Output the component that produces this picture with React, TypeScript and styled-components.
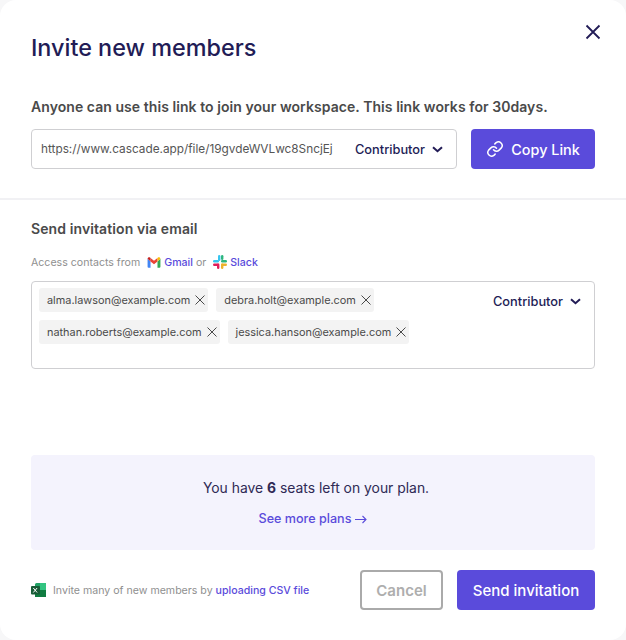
import React from 'react';
import styled, { createGlobalStyle } from 'styled-components';

const GlobalStyle = createGlobalStyle`
    html, body {
        margin: 0;
        background: #f7f7f8;
    }
    body {
        font-family: Inter, "Liberation Sans", sans-serif;
    }
`;

const Modal = styled.div`
    position: relative;
    width: 626px;
    height: 640px;
    box-sizing: border-box;
    background: #fff;
    border-radius: 16px;
    overflow: hidden;
`;

const CloseButton = styled.button`
    position: absolute;
    top: 23px;
    right: 24px;
    width: 18px;
    height: 18px;
    padding: 0;
    border: 0;
    background: none;
    color: #221c56;
    display: flex;
`;

const LinkSection = styled.section`
    height: 200px;
    box-sizing: border-box;
    padding: 33px 31px 0;
    border-bottom: 2px solid #f1f1f4;
`;

const Title = styled.h1`
    margin: 0;
    font-size: 23.4px;
    line-height: 30px;
    font-weight: 500;
    color: #221c56;
`;

const Hint = styled.p`
    margin: 34px 0 0;
    font-size: 14px;
    line-height: 20px;
    font-weight: 600;
    letter-spacing: 0.06px;
    color: #4a4a4a;
`;

const LinkRow = styled.div`
    display: flex;
    gap: 14px;
    margin-top: 12px;
`;

const LinkField = styled.div`
    width: 426px;
    height: 40px;
    box-sizing: border-box;
    display: flex;
    align-items: center;
    justify-content: space-between;
    padding: 0 13px 0 9px;
    border: 1px solid #cfcfd2;
    border-radius: 4px;
`;

const LinkText = styled.span`
    font-size: 11.8px;
    color: #555;
    white-space: nowrap;
`;

const RoleSelect = styled.span`
    display: inline-flex;
    align-items: center;
    gap: 7px;
    font-size: 12.8px;
    font-weight: 500;
    color: #221c56;
`;

const PrimaryButton = styled.button<{ $width: number }>`
    width: ${(p) => p.$width}px;
    height: 40px;
    display: inline-flex;
    align-items: center;
    justify-content: center;
    gap: 7px;
    padding: 0;
    border: 0;
    border-radius: 4px;
    background: #5a4bdb;
    color: #fff;
    font-family: inherit;
    font-size: 14.4px;
    font-weight: 500;
`;

const SendButton = styled(PrimaryButton)`
    font-size: 15px;
`;

const EmailSection = styled.section`
    padding: 19px 31px 0;
`;

const SectionHeading = styled.h2`
    margin: 0;
    font-size: 14px;
    line-height: 20px;
    font-weight: 600;
    letter-spacing: 0.1px;
    color: #4a4a4a;
`;

const ContactsLine = styled.div`
    display: flex;
    align-items: center;
    margin-top: 13px;
    height: 20px;
    font-size: 10.6px;
    color: #8f8f8f;
`;

const Accent = styled.span`
    color: #5a4bdb;
    font-weight: 500;
`;

const BrandIcon = styled.svg`
    width: 14px;
    height: 14px;
    margin: 0 3px 0 7px;
    flex: none;
`;

const Spacer = styled.span`
    width: 3px;
`;

const InviteBox = styled.div`
    position: relative;
    height: 88px;
    margin-top: 9px;
    box-sizing: border-box;
    padding: 6px 7px;
    border: 1px solid #cfcfd2;
    border-radius: 4px;
`;

const ChipList = styled.div`
    display: flex;
    flex-wrap: wrap;
    gap: 8px;
    width: 400px;
`;

const Chip = styled.span`
    height: 24px;
    box-sizing: border-box;
    display: inline-flex;
    align-items: center;
    gap: 4px;
    padding: 0 2px 0 8px;
    background: #f3f3f3;
    border-radius: 3px;
    font-size: 10.9px;
    color: #4a4a4a;
    white-space: nowrap;
`;

const BoxRole = styled(RoleSelect)`
    position: absolute;
    top: 12px;
    right: 13px;
`;

const PlanPanel = styled.section`
    height: 95px;
    margin: 86px 31px 0;
    display: flex;
    flex-direction: column;
    align-items: center;
    border-radius: 4px;
    background: #f4f3fd;
`;

const PlanText = styled.p`
    margin: 23px 0 0;
    padding-left: 6px;
    font-size: 13.9px;
    line-height: 20px;
    color: #2f2a55;

    b {
        font-weight: 700;
    }
`;

const PlanLink = styled.a`
    display: inline-flex;
    align-items: center;
    gap: 4px;
    margin-top: 13px;
    font-size: 12.6px;
    line-height: 16px;
    font-weight: 500;
    color: #5a4bdb;
`;

const Footer = styled.footer`
    display: flex;
    align-items: center;
    margin: 20px 31px 0;
`;

const CsvNote = styled.div`
    flex: 1;
    display: flex;
    align-items: center;
    gap: 7px;
    font-size: 10.6px;
    color: #8f8f8f;
    white-space: nowrap;
`;

const CancelButton = styled.button`
    width: 83px;
    height: 40px;
    margin-right: 14px;
    padding: 0;
    border: 2px solid #aaa;
    border-radius: 4px;
    background: #fff;
    color: #aeaeae;
    font-family: inherit;
    font-size: 15px;
    font-weight: 600;
`;

const XIcon = ({ size = 12 }: { size?: number }) => (
    <svg width={size} height={size} viewBox="0 0 12 12" fill="none" stroke="currentColor" strokeWidth="1">
        <path d="M1.5 1.5l9 9M10.5 1.5l-9 9" />
    </svg>
);

const Chevron = () => (
    <svg width="11" height="7" viewBox="0 0 11 7" fill="none" stroke="currentColor" strokeWidth="2">
        <path d="M1 1.2l4.500 4 4.500-4" />
    </svg>
);

const ArrowRight = () => (
    <svg width="12" height="9" viewBox="0 0 12 9" fill="none" stroke="currentColor" strokeWidth="1.100">
        <path d="M0 4.500h11M7.500 1l3.500 3.500L7.500 8" />
    </svg>
);

const LinkIcon = () => (
    <svg width="18" height="18" viewBox="0 0 24 24" fill="none" stroke="currentColor" strokeWidth="2" strokeLinecap="round" strokeLinejoin="round">
        <path d="M10 13a5 5 0 0 0 7.500.500l3-3a5 5 0 0 0-7-7l-1.700 1.700" />
        <path d="M14 11a5 5 0 0 0-7.500-.500l-3 3a5 5 0 0 0 7 7l1.700-1.700" />
    </svg>
);

const GmailIcon = () => (
    <BrandIcon viewBox="0 0 14 12" style={{ height: 11 }}>
        <path d="M0 2v8.600c0 .600.400 1 1 1h2.200V5z" fill="#4285f4" />
        <path d="M14 2v8.600c0 .600-.400 1-1 1h-2.200V5z" fill="#34a853" />
        <path d="M3.200 5V1.200L7 4l3.800-2.800V5L7 7.800z" fill="#ea4335" />
        <path d="M0 2c0-1.400 1.600-2.200 2.700-1.400l.500.600V5z" fill="#c5221f" />
        <path d="M10.800 1.200l.500-.600C12.400-.200 14 .600 14 2l-3.200 3z" fill="#fbbc04" />
    </BrandIcon>
);

const SlackIcon = () => (
    <BrandIcon viewBox="0 0 14 14">
        <rect x="0" y="5" width="6" height="2.400" rx="1.200" fill="#36c5f0" />
        <rect x="5" y="0" width="2.400" height="6" rx="1.200" fill="#36c5f0" />
        <rect x="8" y="5" width="6" height="2.400" rx="1.200" fill="#2eb67d" />
        <rect x="8" y="0" width="2.400" height="5" rx="1.200" fill="#2eb67d" />
        <rect x="8" y="8.500" width="6" height="2.400" rx="1.200" fill="#ecb22e" />
        <rect x="8" y="8.500" width="2.400" height="5.500" rx="1.200" fill="#ecb22e" />
        <rect x="0" y="8.500" width="6" height="2.400" rx="1.200" fill="#e01e5a" />
        <rect x="4" y="8.500" width="2.400" height="5.500" rx="1.200" fill="#e01e5a" />
    </BrandIcon>
);

const ExcelIcon = () => (
    <svg width="15" height="14" viewBox="0 0 15 14">
        <rect x="4" y="0" width="11" height="14" rx="1.500" fill="#21a366" />
        <rect x="4" y="7" width="11" height="7" fill="#107c41" />
        <rect x="9" y="0" width="6" height="7" fill="#33c481" />
        <rect x="0" y="3" width="9" height="8.500" rx="1" fill="#185c37" />
        <path d="M2.300 5l3.800 4.500M6.100 5L2.300 9.500" stroke="#fff" strokeWidth="1" />
    </svg>
);

const emails = [
    'alma.lawson@example.com',
    'debra.holt@example.com',
    'nathan.roberts@example.com',
    'jessica.hanson@example.com',
];

export default function App() {
    return (
        <Modal>
            <GlobalStyle />
            <CloseButton aria-label="Close">
                <svg width="18" height="18" viewBox="0 0 18 18" fill="none" stroke="currentColor" strokeWidth="1.800">
                    <path d="M2.500 2.500l13 13M15.500 2.500l-13 13" />
                </svg>
            </CloseButton>
            <LinkSection>
                <Title>Invite new members</Title>
                <Hint>Anyone can use this link to join your workspace. This link works for 30days.</Hint>
                <LinkRow>
                    <LinkField>
                        <LinkText>https://www.cascade.app/file/19gvdeWVLwc8SncjEj</LinkText>
                        <RoleSelect>
                            Contributor <Chevron />
                        </RoleSelect>
                    </LinkField>
                    <PrimaryButton $width={124}>
                        <LinkIcon />
                        Copy Link
                    </PrimaryButton>
                </LinkRow>
            </LinkSection>
            <EmailSection>
                <SectionHeading>Send invitation via email</SectionHeading>
                <ContactsLine>
                    Access contacts from
                    <GmailIcon />
                    <Accent>Gmail</Accent>
                    <Spacer />
                    or
                    <SlackIcon />
                    <Accent>Slack</Accent>
                </ContactsLine>
                <InviteBox>
                    <ChipList>
                        {emails.map((email) => (
                            <Chip key={email}>
                                {email}
                                <XIcon />
                            </Chip>
                        ))}
                    </ChipList>
                    <BoxRole>
                        Contributor <Chevron />
                    </BoxRole>
                </InviteBox>
            </EmailSection>
            <PlanPanel>
                <PlanText>
                    You have <b>6</b> seats left on your plan.
                </PlanText>
                <PlanLink>
                    See more plans <ArrowRight />
                </PlanLink>
            </PlanPanel>
            <Footer>
                <CsvNote>
                    <ExcelIcon />
                    <span>
                        Invite many of new members by <Accent>uploading CSV file</Accent>
                    </span>
                </CsvNote>
                <CancelButton>Cancel</CancelButton>
                <SendButton $width={138}>Send invitation</SendButton>
            </Footer>
        </Modal>
    );
}
